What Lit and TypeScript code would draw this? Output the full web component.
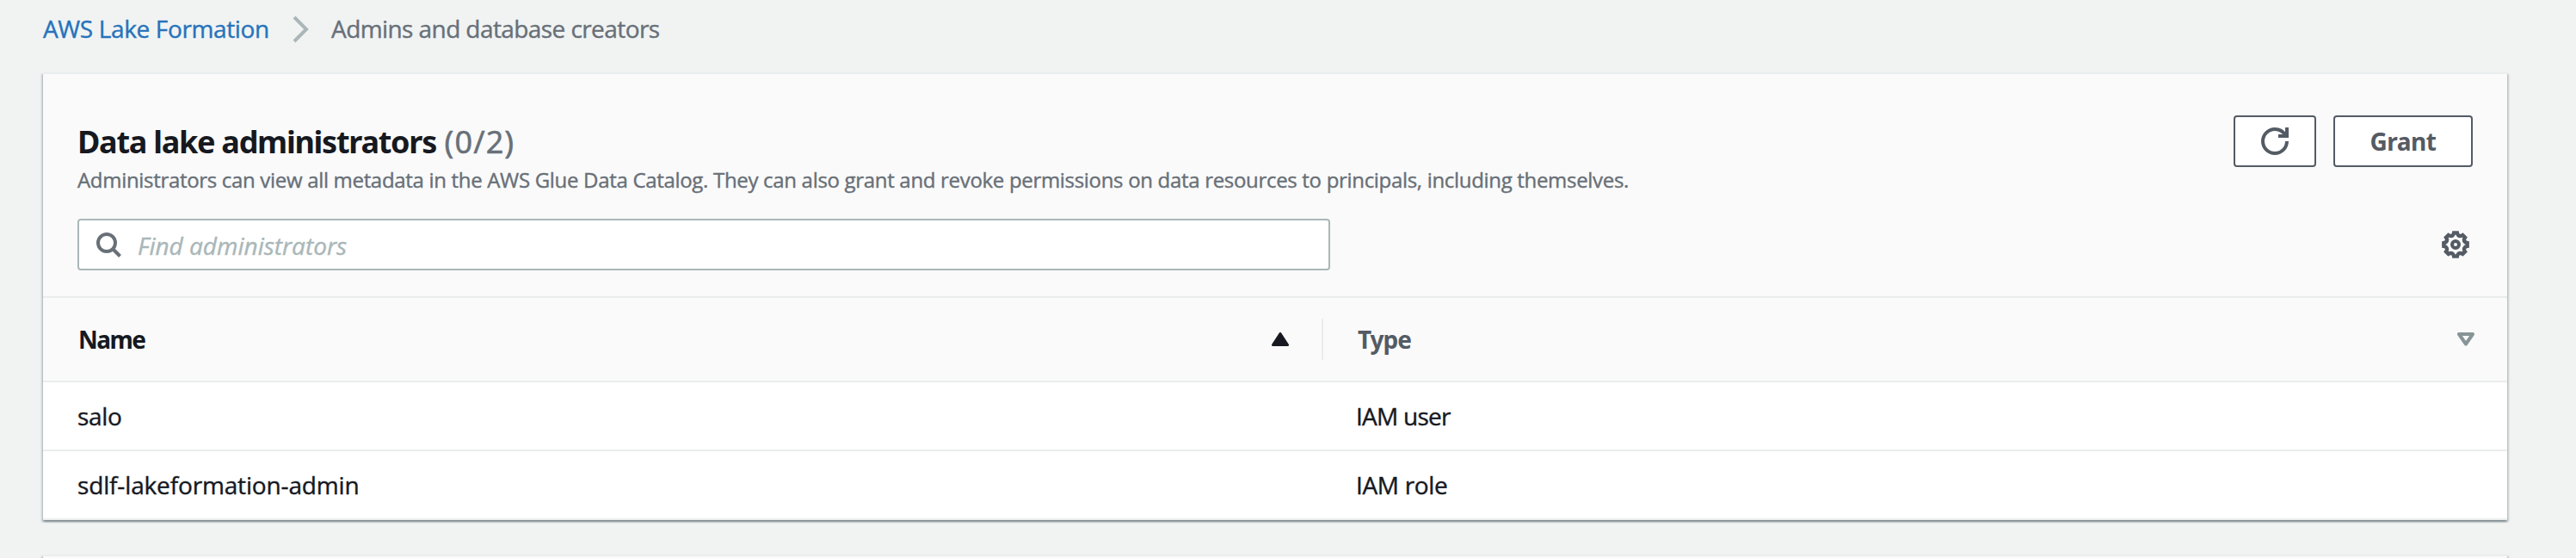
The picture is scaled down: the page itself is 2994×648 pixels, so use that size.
import { LitElement, html, css, svg } from "lit";
import { customElement, state } from "lit/decorators.js";

interface Principal {
  name: string;
  type: string;
  nameClass: string;
  typeClass: string;
}

/** Outline of an eight-toothed cog centred on (16,16). */
function cogPath(): string {
  const at = (r: number, deg: number) => {
    const a = (deg * Math.PI) / 180;
    return `${(16 + r * Math.sin(a)).toFixed(2)} ${(16 - r * Math.cos(a)).toFixed(2)}`;
  };
  let d = "";
  for (let i = 0; i < 8; i++) {
    const c = i * 45;
    d += `${i ? "L" : "M"}${at(13.8, c - 8)}L${at(13.8, c + 8)}Q${at(12, c + 11)} ${at(11.4, c + 16)}Q${at(10.6, c + 22.5)} ${at(11.4, c + 29)}Q${at(12, c + 34)} ${at(13.8, c + 37)}`;
  }
  return d + "Z";
}

const refreshIcon = svg`<svg class="icon" width="32" height="32" viewBox="0 0 32 32" fill="none" stroke="currentColor" stroke-width="4"><path d="M30 16A14 14 0 1 1 16 2C21.5 2 26 5 28.6 9.5"/><path d="M30 0V10H20"/></svg>`;
const cogIcon = svg`<svg class="icon" width="32" height="32" viewBox="0 0 32 32" fill="none" stroke="currentColor" stroke-width="4.4"><path d="${cogPath()}"/><circle cx="16" cy="16" r="4" stroke-width="4"/></svg>`;
const searchIcon = svg`<svg class="icon" width="32" height="32" viewBox="0 0 32 32" fill="none" stroke="currentColor" stroke-width="4"><circle cx="14" cy="14" r="10"/><path d="M21 21L29.5 29.5"/></svg>`;
const chevronIcon = svg`<svg class="icon" width="20" height="32" viewBox="0 0 20 32" fill="none" stroke="currentColor" stroke-width="4"><path d="M2 2L16 16L2 30"/></svg>`;
const sortedIcon = svg`<svg class="icon" width="20" height="16" viewBox="0 0 20 16"><path d="M10 1.5L18.5 14.5H1.5Z" fill="currentColor" stroke="currentColor" stroke-width="3" stroke-linejoin="round"/></svg>`;
const sortableIcon = svg`<svg class="icon" width="20" height="16" viewBox="0 0 20 16"><path d="M2 2H18L10 13.5Z" fill="none" stroke="currentColor" stroke-width="4" stroke-linejoin="round"/></svg>`;

@customElement("app-root")
export class AppRoot extends LitElement {
  @state() private principals: Principal[] = [
    { name: "salo", type: "IAM user", nameClass: "salo", typeClass: "user" },
    { name: "sdlf-lakeformation-admin", type: "IAM role", nameClass: "sdlf", typeClass: "role" },
  ];

  static styles = css`
    :host { display: block; height: 648px; overflow: hidden; background: #f1f3f3; color: #16191f;
      font-family: "Open Sans", "Noto Sans", sans-serif; font-size: 28px; white-space: nowrap;
      -webkit-text-stroke: 0.4px currentColor; }
    * { box-sizing: border-box; }
    .page { padding: 0 80px 0 50px; }
    .icon { display: block; flex: none; }
    .crumbs { display: flex; height: 84px; line-height: 66px; color: #687078; }
    .crumbs a { color: #2773bb; width: 290px; letter-spacing: -0.36px; text-decoration: none; }
    .crumbs .sep { color: #aab7b8; padding-top: 18px; width: 45px; }
    .crumbs .here { letter-spacing: -0.58px; }
    .card { background: #fff; border-top: 2px solid #eaeded;
      box-shadow: 0 2px 2px 0 rgba(0,28,36,.3), 2px 2px 2px 0 rgba(0,28,36,.15), -2px 2px 2px 0 rgba(0,28,36,.15); }
    .head { background: #fafafa; padding: 48px 40px 30px; height: 260px; border-bottom: 2px solid #eaeded; }
    .top { display: flex; justify-content: space-between; height: 120px; }
    h2 { margin: 9px 0 4px; font-family: "Noto Sans", sans-serif; font-size: 36px; line-height: 44px; font-weight: 700; letter-spacing: -1.26px; -webkit-text-stroke: 0; }
    .count { font-weight: 400; color: #687078; letter-spacing: 1.1px; margin-left: 1.5px; -webkit-text-stroke: 0.5px currentColor; }
    .desc { margin: 0; font-size: 24px; line-height: 36px; color: #687078; letter-spacing: -0.314px; }
    .actions { display: flex; gap: 20px; }
    .btn { display: flex; align-items: center; justify-content: center; height: 60px; width: 162px;
      border: 2px solid #545b64; border-radius: 4px; background: #fff; color: #545b64;
      font: 700 28px "Noto Sans", sans-serif; letter-spacing: -0.5px; padding: 0 0 1px; -webkit-text-stroke: 0; }
    .btn.square { width: 96px; padding: 0; }
    .tools { display: flex; justify-content: space-between; align-items: center; color: #545b64; padding-right: 4px; }
    .search { display: flex; align-items: center; width: 1456px; height: 60px; padding-left: 18px; gap: 18px;
      border: 2px solid #aab7b8; border-radius: 4px; background: #fff; color: #687078; }
    .search span { font-style: italic; color: #aab7b8; line-height: 56px; padding-top: 1px; }
    .row { display: grid; grid-template-columns: 1488px 1fr; height: 80px; border-bottom: 2px solid #eaeded; align-items: center; }
    .row > div { padding-left: 40px; }
    .row > .type { padding-left: 38px; }
    .row.labels { background: #fafafa; height: 98px; font-family: "Noto Sans", sans-serif; font-weight: 700; -webkit-text-stroke: 0; }
    .row.labels > div { display: flex; justify-content: space-between; align-items: center; height: 48px; padding-right: 38px; }
    .row.labels > .name { border-right: 2px solid #eaeded; letter-spacing: -1.5px; padding-left: 41px; }
    .row.labels > .type { padding-left: 40px; color: #545b64; letter-spacing: -1px; }
    .labels span { padding-bottom: 1px; }
    .labels .type .icon { color: #879596; }
    .salo { letter-spacing: -0.3px; }
    .sdlf { letter-spacing: -0.15px; }
    .user { letter-spacing: -0.74px; }
    .role { letter-spacing: -0.33px; }
    .next { margin-top: 40px; }
    .next .head { height: 60px; }
  `;

  render() {
    return html`
      <div class="page">
        <nav class="crumbs">
          <a>AWS Lake Formation</a>
          <div class="sep">${chevronIcon}</div>
          <span class="here">Admins and database creators</span>
        </nav>
        <section class="card">
          <div class="head">
            <div class="top">
              <div>
                <h2>Data lake administrators <span class="count">(0/2)</span></h2>
                <p class="desc">Administrators can view all metadata in the AWS Glue Data Catalog. They can also grant and revoke permissions on data resources to principals, including themselves.</p>
              </div>
              <div class="actions">
                <button class="btn square" aria-label="Refresh">${refreshIcon}</button>
                <button class="btn">Grant</button>
              </div>
            </div>
            <div class="tools">
              <div class="search">${searchIcon}<span>Find administrators</span></div>
              ${cogIcon}
            </div>
          </div>
          <div class="row labels">
            <div class="name"><span>Name</span>${sortedIcon}</div>
            <div class="type"><span>Type</span>${sortableIcon}</div>
          </div>
          ${this.principals.map(
            (p) => html`<div class="row">
              <div class="${p.nameClass}">${p.name}</div>
              <div class="type ${p.typeClass}">${p.type}</div>
            </div>`
          )}
        </section>
        <section class="card next"><div class="head"></div></section>
      </div>
    `;
  }
}
